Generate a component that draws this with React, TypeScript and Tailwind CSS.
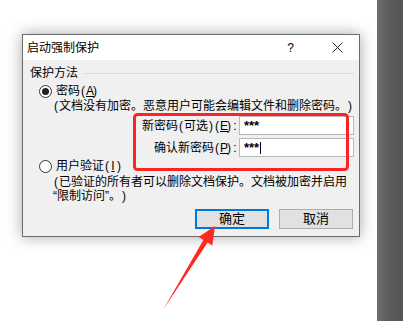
import React from "react";

// half-width chars get a 6px cell like the dialog font; "&X" = underlined access key
function Txt({text}: {text: string}) {
    const parts: React.ReactNode[] = [];
    let run = "";
    const flush = (k: number) => {
        if (run) {
            parts.push(<span key={"r" + k}>{run}</span>);
            run = "";
        }
    };
    for (let i = 0; i < text.length; i++) {
        const c = text[i];
        if (c === "&") {
            flush(i);
            i++;
            parts.push(
                <span key={i} className="inline-block w-[6px] text-center underline">
                    {text[i]}
                </span>
            );
        } else if (c.charCodeAt(0) < 128) {
            flush(i);
            parts.push(
                <span key={i} className="inline-block w-[6px] text-center">
                    {c}
                </span>
            );
        } else {
            run += c;
        }
    }
    flush(text.length);
    return <>{parts}</>;
}

function Radio({checked}: {checked?: boolean}) {
    return (
        <span className="flex h-[13px] w-[13px] items-center justify-center rounded-full border border-[#333] bg-white">
            {checked && <span className="h-[7px] w-[7px] rounded-full bg-[#222]" />}
        </span>
    );
}

function Btn({label, primary}: {label: string; primary?: boolean}) {
    return (
        <div
            className={
                primary
                    ? "flex h-[20px] w-[74px] items-center justify-center border-2 border-[#0078d7] bg-[#e1e1e1] text-[13px] leading-[14px]"
                    : "flex h-[20px] w-[74px] items-center justify-center border border-[#adadad] bg-[#e1e1e1] text-[13px] leading-[14px]"
            }
        >
            {label}
        </div>
    );
}

export default function App() {
    return (
        <div className="relative flex h-[321px] w-[403px] overflow-hidden bg-white font-['Liberation_Sans','Noto_Sans_CJK_SC',sans-serif] text-black">
            <div className="w-[377px] pl-[22px] pt-[34px]">
                <div className="flex h-[203px] w-[338px] flex-col border border-[#6b6b6b] bg-[#f0f0f0] shadow-[0_0_14px_rgba(0,0,0,0.35)]">
                    {/* title bar */}
                    <div className="flex h-[25px] items-center bg-white pl-[4px] text-[12px]">
                        <span className="flex-1">启动强制保护</span>
                        <span className="mr-[38px] text-[12px]">?</span>
                        <svg width="11" height="11" viewBox="0 0 11 11" className="mr-[16px]">
                            <path d="M0.5 0.5 L10.5 10.5 M10.5 0.5 L0.5 10.5" stroke="#222" strokeWidth="1" />
                        </svg>
                    </div>

                    <div className="flex flex-col text-[12px] leading-[14px]">
                        <div className="mt-[6px] flex h-[14px] items-center pl-[7px] pr-[5px]">
                            <span>保护方法</span>
                            <span className="ml-[5px] h-px flex-1 bg-[#dcdcdc]" />
                        </div>

                        <div className="mt-[4px] flex h-[14px] items-center gap-[4px] pl-[16px]">
                            <Radio checked />
                            <span>
                                <Txt text="密码(&A)" />
                            </span>
                        </div>

                        <div className="mt-[1px] h-[14px] whitespace-nowrap pl-[30px]">
                            <Txt text="(文档没有加密。恶意用户可能会编辑文件和删除密码。)" />
                        </div>

                        <div className="mt-[3px] flex h-[19px] items-center justify-end pr-[5px]">
                            <span className="mr-[1px] whitespace-nowrap">
                                <Txt text="新密码(可选)(&E):" />
                            </span>
                            <div className="flex h-[19px] w-[115px] items-center border border-[#b9b9b9] bg-white pl-[4px] text-[13px] font-bold">
                                ***
                            </div>
                        </div>

                        <div className="mt-[3px] flex h-[19px] items-center justify-end pr-[5px]">
                            <span className="mr-[1px] whitespace-nowrap">
                                <Txt text="确认新密码(&P):" />
                            </span>
                            <div className="flex h-[19px] w-[115px] items-center border border-[#b9b9b9] bg-white pl-[4px] text-[13px] font-bold">
                                ***
                                <span className="ml-[1px] h-[12px] w-px bg-black" />
                            </div>
                        </div>

                        <div className="mt-[2px] flex h-[14px] items-center gap-[4px] pl-[16px]">
                            <Radio />
                            <span>
                                <Txt text="用户验证(&I)" />
                            </span>
                        </div>

                        <div className="mt-[3px] pl-[30px] leading-[13.5px]">
                            <div className="whitespace-nowrap">
                                <Txt text="(已验证的所有者可以删除文档保护。文档被加密并启用" />
                            </div>
                            <div className="whitespace-nowrap">
                                <Txt text="“限制访问”。)" />
                            </div>
                        </div>

                        <div className="mt-[6px] flex justify-end gap-[10px] pr-[6px]">
                            <Btn label="确定" primary />
                            <Btn label="取消" />
                        </div>
                    </div>
                </div>
            </div>
            <div className="flex-1 bg-gradient-to-r from-[#6f6f6f] via-[#5a5a5a] to-[#555555]" />

            {/* annotation overlay */}
            <svg className="pointer-events-none absolute inset-0" width="403" height="321" viewBox="0 0 403 321">
                <rect x="134.5" y="114.5" width="213" height="55" rx="3" fill="none" stroke="#ff2222" strokeWidth="3" />
                <polygon
                    points="215,226 198.7,237.1 203.4,240 163,310 207.6,242.6 212.3,245.5"
                    fill="#ff2a1f"
                />
            </svg>
        </div>
    );
}
